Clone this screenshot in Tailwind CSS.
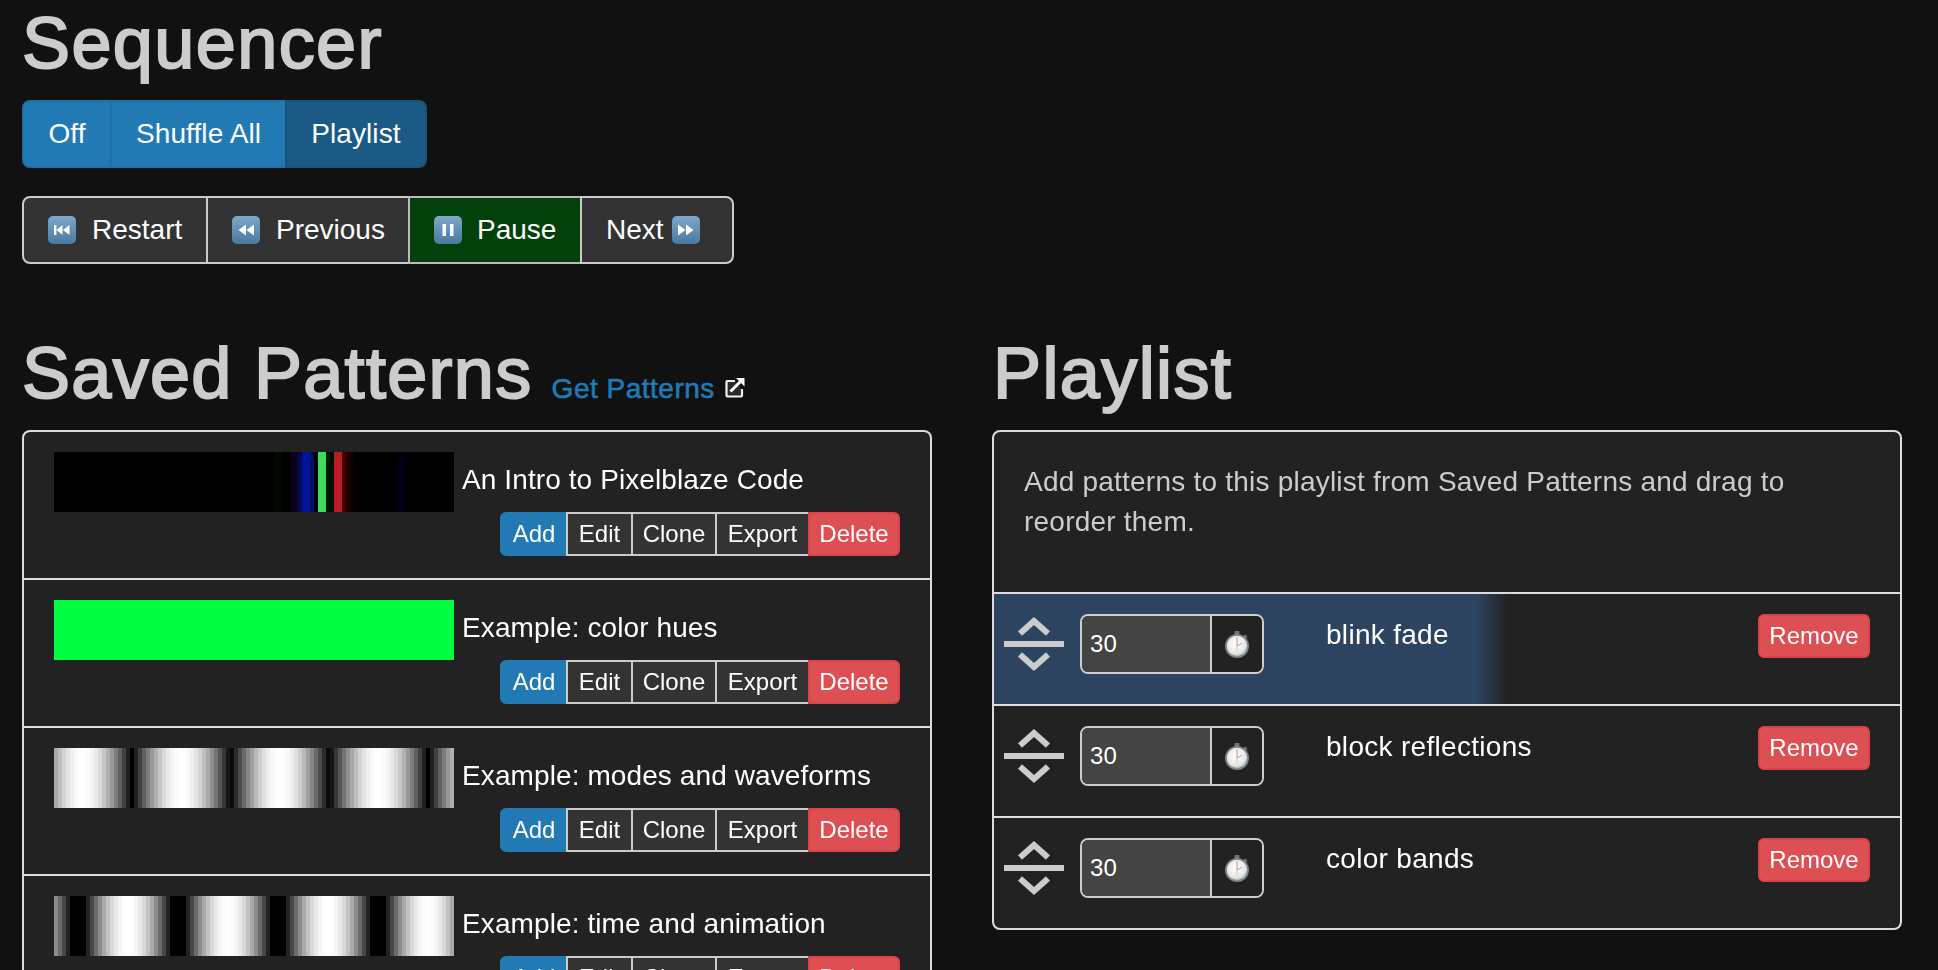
<!DOCTYPE html>
<html lang="en">
<head>
<meta charset="utf-8">
<title>Sequencer</title>
<script src="https://cdn.jsdelivr.net/npm/@tailwindcss/browser@4"></script>
</head>
<body class="bg-[#111111] text-white font-['Liberation_Sans',Arial,sans-serif] text-[28px] leading-[40px] tracking-[0.1px] overflow-hidden">

<!-- shared icon defs -->
<svg class="absolute w-0 h-0">
    <defs>
        <linearGradient id="tile" x1="0" y1="0" x2="0" y2="1">
            <stop offset="0" stop-color="#7fa8c9"/>
            <stop offset="0.5" stop-color="#6490b3"/>
            <stop offset="1" stop-color="#4a7a9f"/>
        </linearGradient>
        <radialGradient id="face" cx="0.45" cy="0.4" r="0.65">
            <stop offset="0" stop-color="#ffffff"/>
            <stop offset="0.7" stop-color="#e8e8e8"/>
            <stop offset="1" stop-color="#a8a8a8"/>
        </radialGradient>
        <g id="handle">
            <polyline points="16,19.500 30,7 44,19.500" fill="none" stroke="#cccccc" stroke-width="6"/>
            <rect x="0" y="27" width="60" height="6" fill="#cccccc"/>
            <polyline points="16,40.500 30,53 44,40.500" fill="none" stroke="#cccccc" stroke-width="6"/>
        </g>
        <g id="watch">
            <rect x="9.500" y="0" width="5" height="4" rx="1" fill="#6f7780"/>
            <rect x="10.800" y="3" width="2.400" height="3" fill="#59616a"/>
            <path d="M20 3.500l2.500 2.500-1.500 1.500-2.500-2.500z" fill="#6f7780"/>
            <circle cx="12" cy="15" r="12" fill="#7d848c"/>
            <circle cx="12" cy="15" r="10.200" fill="url(#face)"/>
            <path d="M12 6v9" stroke="#e69a8a" stroke-width="1.200"/>
            <path d="M12 15l5-3" stroke="#9aa0a6" stroke-width="1"/>
            <path d="M12 15v6" stroke="#c9c9c9" stroke-width="1"/>
        </g>
    </defs>
</svg>

<div class="w-[1938px] h-[970px] overflow-hidden pl-[22px] pt-[4px]">

    <!-- Sequencer -->
    <h1 class="text-[#cccccc] text-[72px] leading-[79px] tracking-[1.4px] [-webkit-text-stroke:2px_#cccccc] mb-[17px]">Sequencer</h1>

    <div class="flex w-max h-[68px] text-white">
        <button class="w-[90px] bg-[#227ab5] border-2 border-[#1f70a6] rounded-l-[8px]">Off</button>
        <button class="px-[24px] -ml-[2px] bg-[#227ab5] border-2 border-[#1f70a6]">Shuffle All</button>
        <button class="px-[24px] -ml-[2px] bg-[#1a5a85] border-2 border-[#1b5279] rounded-r-[8px]">Playlist</button>
    </div>

    <div class="flex w-max h-[68px] mt-[28px] text-white tracking-normal">
        <button class="flex items-center w-[186px] pl-[24px] bg-[#333333] border-2 border-[#cccccc] rounded-l-[8px]">
            <svg class="w-[28px] h-[28px] mr-[16px]" viewBox="0 0 28 28"><rect width="28" height="28" rx="5" fill="url(#tile)"/><path d="M6 9h2.400v10H6zM14.500 9v10l-6-5zM21.500 9v10l-6.500-5z" fill="#fff"/></svg>
            Restart
        </button>
        <button class="flex items-center w-[204px] pl-[24px] -ml-[2px] bg-[#333333] border-2 border-[#cccccc]">
            <svg class="w-[28px] h-[28px] mr-[16px]" viewBox="0 0 28 28"><rect width="28" height="28" rx="5" fill="url(#tile)"/><path d="M14 8.500v11l-7.500-5.500zM22 8.500v11l-7.500-5.500z" fill="#fff"/></svg>
            Previous
        </button>
        <button class="flex items-center w-[174px] pl-[24px] -ml-[2px] bg-[#02410a] border-2 border-[#bbbbbb]">
            <svg class="w-[28px] h-[28px] mr-[15px]" viewBox="0 0 28 28"><rect width="28" height="28" rx="5" fill="url(#tile)"/><path d="M8.500 8h3.500v12H8.500zM16 8h3.500v12H16z" fill="#fff"/></svg>
            Pause
        </button>
        <button class="flex items-center w-[154px] pl-[24px] -ml-[2px] bg-[#333333] border-2 border-[#cccccc] rounded-r-[8px]">
            Next
            <svg class="w-[28px] h-[28px] ml-[8px]" viewBox="0 0 28 28"><rect width="28" height="28" rx="5" fill="url(#tile)"/><path d="M6 8.500v11l7.500-5.500zM14 8.500v11l7.500-5.500z" fill="#fff"/></svg>
        </button>
    </div>

    <div class="grid grid-cols-[910px_910px] gap-[60px] mt-[70px]">

        <!-- Saved Patterns -->
        <div>
            <h1 class="h-[79px] text-[#cccccc] text-[72px] leading-[79px] mb-[17px] whitespace-nowrap">
                <span class="tracking-[1.3px] [-webkit-text-stroke:2px_#cccccc]">Saved Patterns</span>
                <a class="-ml-[1px] text-[28px] text-[#207ab7] tracking-[0.5px] [-webkit-text-stroke:0.6px_#207ab7]">Get Patterns<svg class="inline-block w-[20px] h-[21px] ml-[10px] align-baseline" viewBox="0 0 20 21">
                    <path d="M10 4H2.500a1 1 0 0 0-1 1v13.500a1 1 0 0 0 1 1H16a1 1 0 0 0 1-1V12" fill="#2a2a2a" stroke="#f2f2f2" stroke-width="2.200"/>
                    <path d="M5.500 14.500L16 4" stroke="#ffffff" stroke-width="3" fill="none"/>
                    <path d="M11 1h8.500v8.500z" fill="#ffffff"/>
                </svg></a>
            </h1>

            <div class="border-2 border-[#dddddd] rounded-t-[8px] bg-[#222222]">
                <div class="px-[30px] pt-[20px] pb-[22px] border-b-2 border-[#dddddd]">
                    <div class="flex">
                        <canvas data-strip="intro" width="400" height="60" class="w-[400px] h-[60px]"></canvas>
                        <span class="ml-[8px] mt-[8px]">An Intro to Pixelblaze Code</span>
                    </div>
                    <div class="flex justify-end text-[24px] leading-[36px] tracking-normal">
                        <button class="w-[68px] py-[2px] bg-[#227ab5] border-2 border-[#227ab5] rounded-l-[6px]">Add</button>
                        <button class="w-[67px] py-[2px] -ml-[2px] bg-[#333333] border-2 border-[#cccccc]">Edit</button>
                        <button class="w-[86px] py-[2px] -ml-[2px] bg-[#333333] border-2 border-[#cccccc]">Clone</button>
                        <button class="w-[95px] py-[2px] -ml-[2px] bg-[#333333] border-2 border-[#cccccc]">Export</button>
                        <button class="w-[92px] py-[2px] -ml-[2px] bg-[#de4f54] border-2 border-[#d9434a] rounded-r-[6px]">Delete</button>
                    </div>
                </div>
                <div class="px-[30px] pt-[20px] pb-[22px] border-b-2 border-[#dddddd]">
                    <div class="flex">
                        <div class="w-[400px] h-[60px] bg-[#00ff41]"></div>
                        <span class="ml-[8px] mt-[8px]">Example: color hues</span>
                    </div>
                    <div class="flex justify-end text-[24px] leading-[36px] tracking-normal">
                        <button class="w-[68px] py-[2px] bg-[#227ab5] border-2 border-[#227ab5] rounded-l-[6px]">Add</button>
                        <button class="w-[67px] py-[2px] -ml-[2px] bg-[#333333] border-2 border-[#cccccc]">Edit</button>
                        <button class="w-[86px] py-[2px] -ml-[2px] bg-[#333333] border-2 border-[#cccccc]">Clone</button>
                        <button class="w-[95px] py-[2px] -ml-[2px] bg-[#333333] border-2 border-[#cccccc]">Export</button>
                        <button class="w-[92px] py-[2px] -ml-[2px] bg-[#de4f54] border-2 border-[#d9434a] rounded-r-[6px]">Delete</button>
                    </div>
                </div>
                <div class="px-[30px] pt-[20px] pb-[22px] border-b-2 border-[#dddddd]">
                    <div class="flex">
                        <canvas data-strip="modes" width="400" height="60" class="w-[400px] h-[60px]"></canvas>
                        <span class="ml-[8px] mt-[8px]">Example: modes and waveforms</span>
                    </div>
                    <div class="flex justify-end text-[24px] leading-[36px] tracking-normal">
                        <button class="w-[68px] py-[2px] bg-[#227ab5] border-2 border-[#227ab5] rounded-l-[6px]">Add</button>
                        <button class="w-[67px] py-[2px] -ml-[2px] bg-[#333333] border-2 border-[#cccccc]">Edit</button>
                        <button class="w-[86px] py-[2px] -ml-[2px] bg-[#333333] border-2 border-[#cccccc]">Clone</button>
                        <button class="w-[95px] py-[2px] -ml-[2px] bg-[#333333] border-2 border-[#cccccc]">Export</button>
                        <button class="w-[92px] py-[2px] -ml-[2px] bg-[#de4f54] border-2 border-[#d9434a] rounded-r-[6px]">Delete</button>
                    </div>
                </div>
                <div class="px-[30px] pt-[20px] pb-[22px]">
                    <div class="flex">
                        <canvas data-strip="time" width="400" height="60" class="w-[400px] h-[60px]"></canvas>
                        <span class="ml-[8px] mt-[8px]">Example: time and animation</span>
                    </div>
                    <div class="flex justify-end text-[24px] leading-[36px] tracking-normal">
                        <button class="w-[68px] py-[2px] bg-[#227ab5] border-2 border-[#227ab5] rounded-l-[6px]">Add</button>
                        <button class="w-[67px] py-[2px] -ml-[2px] bg-[#333333] border-2 border-[#cccccc]">Edit</button>
                        <button class="w-[86px] py-[2px] -ml-[2px] bg-[#333333] border-2 border-[#cccccc]">Clone</button>
                        <button class="w-[95px] py-[2px] -ml-[2px] bg-[#333333] border-2 border-[#cccccc]">Export</button>
                        <button class="w-[92px] py-[2px] -ml-[2px] bg-[#de4f54] border-2 border-[#d9434a] rounded-r-[6px]">Delete</button>
                    </div>
                </div>
            </div>
        </div>

        <!-- Playlist -->
        <div>
            <h1 class="ml-[1px] text-[#cccccc] text-[72px] leading-[79px] tracking-[1.4px] [-webkit-text-stroke:2px_#cccccc] mb-[17px]">Playlist</h1>

            <div class="border-2 border-[#dddddd] rounded-[8px] bg-[#222222]">
                <div class="pl-[30px] pr-[40px] pt-[30px] pb-[50px] border-b-2 border-[#dddddd] text-[#cccccc] tracking-[0.22px]">
                    <p>Add patterns to this playlist from Saved Patterns and drag to reorder them.</p>
                </div>

                <div class="flex h-[112px] pl-[10px] pr-[30px] pt-[20px] border-b-2 border-[#dddddd] bg-[linear-gradient(90deg,#2c4460_0,#2c4460_483px,#222222_514px)]">
                    <svg class="w-[60px] h-[60px] shrink-0" viewBox="0 0 60 60"><use href="#handle"/></svg>
                    <div class="flex w-[184px] h-[60px] ml-[16px] border-2 border-[#cccccc] rounded-[8px] overflow-hidden text-[24px]">
                        <div class="w-[128px] bg-[#444444] pl-[8px] leading-[56px]">30</div>
                        <div class="flex flex-1 items-center justify-center bg-[#222222] border-l-2 border-[#cccccc]"><svg class="w-[24px] h-[27px]" viewBox="0 0 24 27"><use href="#watch"/></svg></div>
                    </div>
                    <span class="ml-[62px] pt-[1px] flex-1 tracking-[0.3px]">blink fade</span>
                    <button class="w-[112px] h-[44px] bg-[#de4f54] border-2 border-[#d9434a] rounded-[6px] text-[24px] leading-[36px] tracking-normal">Remove</button>
                </div>

                <div class="flex h-[112px] pl-[10px] pr-[30px] pt-[20px] border-b-2 border-[#dddddd]">
                    <svg class="w-[60px] h-[60px] shrink-0" viewBox="0 0 60 60"><use href="#handle"/></svg>
                    <div class="flex w-[184px] h-[60px] ml-[16px] border-2 border-[#cccccc] rounded-[8px] overflow-hidden text-[24px]">
                        <div class="w-[128px] bg-[#444444] pl-[8px] leading-[56px]">30</div>
                        <div class="flex flex-1 items-center justify-center bg-[#222222] border-l-2 border-[#cccccc]"><svg class="w-[24px] h-[27px]" viewBox="0 0 24 27"><use href="#watch"/></svg></div>
                    </div>
                    <span class="ml-[62px] pt-[1px] flex-1 tracking-[0.3px]">block reflections</span>
                    <button class="w-[112px] h-[44px] bg-[#de4f54] border-2 border-[#d9434a] rounded-[6px] text-[24px] leading-[36px] tracking-normal">Remove</button>
                </div>

                <div class="flex h-[110px] pl-[10px] pr-[30px] pt-[20px]">
                    <svg class="w-[60px] h-[60px] shrink-0" viewBox="0 0 60 60"><use href="#handle"/></svg>
                    <div class="flex w-[184px] h-[60px] ml-[16px] border-2 border-[#cccccc] rounded-[8px] overflow-hidden text-[24px]">
                        <div class="w-[128px] bg-[#444444] pl-[8px] leading-[56px]">30</div>
                        <div class="flex flex-1 items-center justify-center bg-[#222222] border-l-2 border-[#cccccc]"><svg class="w-[24px] h-[27px]" viewBox="0 0 24 27"><use href="#watch"/></svg></div>
                    </div>
                    <span class="ml-[62px] pt-[1px] flex-1 tracking-[0.3px]">color bands</span>
                    <button class="w-[112px] h-[44px] bg-[#de4f54] border-2 border-[#d9434a] rounded-[6px] text-[24px] leading-[36px] tracking-normal">Remove</button>
                </div>
            </div>
        </div>
    </div>
</div>

<script>
    // draw the pattern previews, one 4px column per pixel
    const strips = {
        intro: function (i) {
            const cols = {
                55: '#000800', 56: '#000800', 59: '#0a0018', 60: '#0c0026', 61: '#000a50',
                62: '#00149a', 63: '#00149a', 64: '#001060', 65: '#000010',
                66: '#3ddc5a', 67: '#3ddc5a', 68: '#001a00', 69: '#001000',
                70: '#b81c24', 71: '#b81c24', 72: '#440000', 73: '#220000', 74: '#100000',
                86: '#000012', 87: '#000012'
            };
            return cols[i] || '#000000';
        },
        modes: function (i) {
            const v = Math.round(255 * Math.abs(Math.sin(Math.PI * (i - 19) / 24.67)));
            return `rgb(${v},${v},${v})`;
        },
        time: function (i) {
            const s = Math.abs(Math.sin(Math.PI * (i - 5.5) / 25));
            const v = Math.round(255 * Math.max(0, (s - 0.2) / 0.8));
            return `rgb(${v},${v},${v})`;
        }
    };

    document.querySelectorAll('canvas[data-strip]').forEach(canvas => {
        const ctx = canvas.getContext('2d');
        const colorAt = strips[canvas.dataset.strip];
        for (let i = 0; i < 100; i++) {
            ctx.fillStyle = colorAt(i);
            ctx.fillRect(i * 4, 0, 4, 60);
        }
    });
</script>
</body>
</html>
